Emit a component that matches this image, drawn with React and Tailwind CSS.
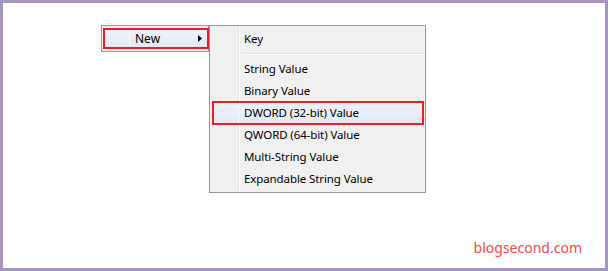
export default function App() {
  const font = { fontFamily: '"Noto Sans", "Open Sans", sans-serif' };
  return (
    <div
      className="w-[608px] h-[271px] border-[3px] border-[#a694c2] bg-white flex flex-col text-black"
      style={font}
    >
      <div className="flex items-start pt-[22px] pl-[98px]">
        {/* Parent menu */}
        <div className="w-[108px] h-[27px] border border-[#979797] bg-[#f0f0f0] pl-px pt-[2px]">
          <div className="relative z-10 w-[106px] h-[21px] border-2 border-[#ee1c24] bg-gradient-to-b from-[#eef2f9] to-[#e2e9f4] flex items-center">
            <div className="w-[25px] h-full border-r border-[#f6f8fb]" />
            <span className="pl-[5px] text-[12px] leading-none flex-1">New</span>
            <svg width="4" height="7" viewBox="0 0 4 7" className="mr-[5px]">
              <path d="M0 0 L4 3.5 L0 7 Z" fill="#000" />
            </svg>
          </div>
        </div>
        {/* Submenu */}
        <div className="relative w-[217px] h-[168px] border border-[#979797] bg-[#f0f0f0] p-[2px] text-[11.5px] tracking-[-0.1px]">
          <div className="absolute top-[2px] bottom-[2px] left-[28px] w-[2px] border-l border-[#e2e3e3] bg-white" />
          <div className="relative h-[22px] flex items-center pl-[32px]">Key</div>
          <div className="relative h-[8px] flex items-center pl-[31px] pr-px">
            <div className="w-full h-[2px] border-t border-[#e0e0e0] bg-white" />
          </div>
          <div className="relative h-[22px] flex items-center pl-[32px]">String Value</div>
          <div className="relative h-[22px] flex items-center pl-[32px]">Binary Value</div>
          <div className="relative h-[22px] flex items-center pl-[32px] bg-gradient-to-b from-[#eef2f9] to-[#e2e9f4]">
            <div className="absolute top-0 bottom-0 left-[26px] w-px bg-[#f6f8fb]" />
            <span className="relative">DWORD (32-bit) Value</span>
            <div className="absolute -top-px -bottom-px left-0 -right-px border-2 border-[#ee1c24]" />
          </div>
          <div className="relative h-[22px] flex items-center pl-[32px]">QWORD (64-bit) Value</div>
          <div className="relative h-[22px] flex items-center pl-[32px]">Multi-String Value</div>
          <div className="relative h-[22px] flex items-center pl-[32px]">Expandable String Value</div>
        </div>
      </div>
      <div className="mt-auto self-end pr-[23px] pb-[10px] text-[14px] leading-[20px] text-[#f04a4a]">
        blogsecond.com
      </div>
    </div>
  );
}
